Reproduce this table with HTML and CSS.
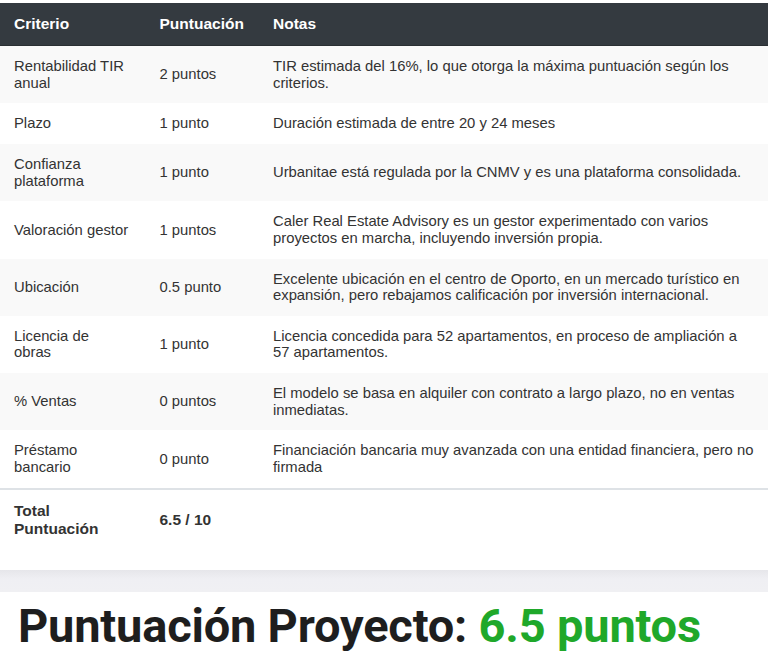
FILE: index.html
```html
<!DOCTYPE html>
<html lang="es">
<head>
<meta charset="utf-8">
<link rel="stylesheet" href="styles.css">
</head>
<body>
<div class="card">
  <table class="score">
    <colgroup><col class="c1"><col class="c2"><col class="c3"></colgroup>
    <thead>
      <tr><th>Criterio</th><th>Puntuación</th><th>Notas</th></tr>
    </thead>
    <tbody>
      <tr><td>Rentabilidad TIR anual</td><td>2 puntos</td><td>TIR estimada del 16%, lo que otorga la máxima puntuación según los criterios.</td></tr>
      <tr><td>Plazo</td><td>1 punto</td><td>Duración estimada de entre 20 y 24 meses</td></tr>
      <tr><td>Confianza plataforma</td><td>1 punto</td><td>Urbanitae está regulada por la CNMV y es una plataforma consolidada.</td></tr>
      <tr><td>Valoración gestor</td><td>1 puntos</td><td>Caler Real Estate Advisory es un gestor experimentado con varios proyectos en marcha, incluyendo inversión propia.</td></tr>
      <tr><td>Ubicación</td><td>0.5 punto</td><td>Excelente ubicación en el centro de Oporto, en un mercado turístico en expansión, pero rebajamos calificación por inversión internacional.</td></tr>
      <tr><td>Licencia de obras</td><td>1 punto</td><td>Licencia concedida para 52 apartamentos, en proceso de ampliación a 57 apartamentos.</td></tr>
      <tr><td>% Ventas</td><td>0 puntos</td><td>El modelo se basa en alquiler con contrato a largo plazo, no en ventas inmediatas.</td></tr>
      <tr><td>Préstamo bancario</td><td>0 punto</td><td>Financiación bancaria muy avanzada con una entidad financiera, pero no firmada</td></tr>
    </tbody>
    <tfoot>
      <tr><td>Total Puntuación</td><td>6.5 / 10</td><td></td></tr>
    </tfoot>
  </table>
</div>
<div class="band"></div>
<h1 class="result">Puntuación Proyecto: <span class="green">6.5 puntos</span></h1>
</body>
</html>
```

FILE: styles.css
```css
html, body { margin: 0; padding: 0; background: #fff; }
body { font-family: "Liberation Sans", Arial, sans-serif; color: #333; }
.card { padding-top: 3px; padding-bottom: 22px; background: #fff; }
.score { width: 100%; border-collapse: collapse; font-size: 14.8px; table-layout: fixed; }
.c1 { width: 143.5px; }
.c2 { width: 115.5px; }
.score th {
  background: #343a40; color: #fff; font-weight: bold; text-align: left;
  padding: 12px 14px; font-size: 15.5px; border-bottom: 1px solid #2a2f33;
}
.score td { padding: 12px 14px 12.25px; vertical-align: middle; line-height: 16.5px; }
.score th:nth-child(2), .score td:nth-child(2) { padding-left: 16px; padding-right: 12px; }
.score tbody tr:nth-child(odd) { background: #f9f9f9; }
.score tbody tr:nth-child(even) { background: #fff; }
.score tfoot td {
  border-top: 2px solid #dee2e6; font-weight: bold; font-size: 15.5px;
  line-height: 17.5px; padding-top: 12.5px; padding-bottom: 11px;
}
.band { height: 22px; background: linear-gradient(#e6e6ea, #efeff3 40%, #f0f0f3); }
.result {
  margin: 0; padding: 5px 0 0 18px;
  font-family: Roboto, "Liberation Sans", sans-serif; font-weight: bold;
  font-size: 47px; line-height: 58px; color: #1e1e1e; letter-spacing: -0.2px;
}
.green { color: #1fa82a; }
```
